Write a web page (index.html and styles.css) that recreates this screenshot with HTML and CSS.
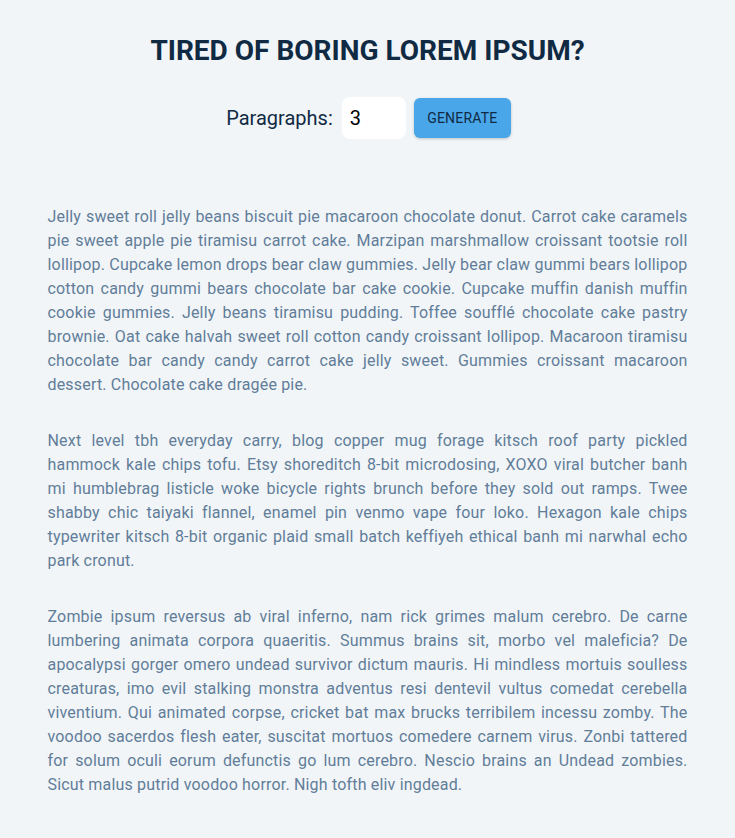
FILE: index.html
```html
<!DOCTYPE html>
<html lang="en">
<head>
<meta charset="utf-8">
<title>Lorem Ipsum Generator</title>
<link rel="stylesheet" href="styles.css">
</head>
<body>
<section class="section-center">
  <h3 class="title">Tired of boring lorem ipsum?</h3>
  <form class="lorem-form">
    <label class="label" for="amount">Paragraphs:</label>
    <input class="amount" type="number" id="amount" value="3">
    <button class="btn" type="button">Generate</button>
  </form>
  <article class="lorem-text">
    <p>Jelly sweet roll jelly beans biscuit pie macaroon chocolate donut. Carrot cake caramels pie sweet apple pie tiramisu carrot cake. Marzipan marshmallow croissant tootsie roll lollipop. Cupcake lemon drops bear claw gummies. Jelly bear claw gummi bears lollipop cotton candy gummi bears chocolate bar cake cookie. Cupcake muffin danish muffin cookie gummies. Jelly beans tiramisu pudding. Toffee soufflé chocolate cake pastry brownie. Oat cake halvah sweet roll cotton candy croissant lollipop. Macaroon tiramisu chocolate bar candy candy carrot cake jelly sweet. Gummies croissant macaroon dessert. Chocolate cake dragée pie.</p>
    <p>Next level tbh everyday carry, blog copper mug forage kitsch roof party pickled hammock kale chips tofu. Etsy shoreditch 8-bit microdosing, XOXO viral butcher banh mi humblebrag listicle woke bicycle rights brunch before they sold out ramps. Twee shabby chic taiyaki flannel, enamel pin venmo vape four loko. Hexagon kale chips typewriter kitsch 8-bit organic plaid small batch keffiyeh ethical banh mi narwhal echo park cronut.</p>
    <p>Zombie ipsum reversus ab viral inferno, nam rick grimes malum cerebro. De carne lumbering animata corpora quaeritis. Summus brains sit, morbo vel maleficia? De apocalypsi gorger omero undead survivor dictum mauris. Hi mindless mortuis soulless creaturas, imo evil stalking monstra adventus resi dentevil vultus comedat cerebella viventium. Qui animated corpse, cricket bat max brucks terribilem incessu zomby. The voodoo sacerdos flesh eater, suscitat mortuos comedere carnem virus. Zonbi tattered for solum oculi eorum defunctis go lum cerebro. Nescio brains an Undead zombies. Sicut malus putrid voodoo horror. Nigh tofth eliv ingdead.</p>
  </article>
</section>
</body>
</html>
```
FILE: styles.css
```css
* {
  box-sizing: border-box;
  margin: 0;
  padding: 0;
}

body {
  background: #f1f5f8;
  color: #102a43;
  font-family: Roboto, "Liberation Sans", sans-serif;
  font-size: 16px;
  line-height: 1.5;
}

.section-center {
  width: 90vw;
  max-width: 640px;
  margin: 0 auto;
  padding-top: 33px;
  padding-bottom: 40px;
}

.title {
  text-align: center;
  text-transform: uppercase;
  font-size: 28px;
  font-weight: 700;
  line-height: 1.25;
  letter-spacing: 0;
  color: #102a43;
  margin-bottom: 29px;
}

.lorem-form {
  display: flex;
  align-items: center;
  justify-content: center;
  gap: 8px;
  padding-left: 2px;
}

.label {
  font-size: 20px;
  color: #102a43;
  margin-right: 1px;
}

.amount {
  width: 64px;
  height: 42px;
  padding: 4px 8px;
  border: none;
  border-radius: 8px;
  background: #fff;
  font-family: Roboto, "Liberation Sans", sans-serif;
  font-size: 20px;
  color: #000;
  outline: none;
  -moz-appearance: textfield;
}

.amount::-webkit-outer-spin-button,
.amount::-webkit-inner-spin-button {
  -webkit-appearance: none;
  margin: 0;
}

.btn {
  width: 97px;
  height: 40px;
  border: none;
  border-radius: 6px;
  background: #49a6e9;
  color: #102a43;
  font-family: Roboto, "Liberation Sans", sans-serif;
  font-size: 14px;
  text-transform: uppercase;
  letter-spacing: 0.2px;
  box-shadow: 0 1px 3px rgba(0, 0, 0, 0.2);
  cursor: pointer;
}

.lorem-text {
  margin-top: 66px;
}

.lorem-text p {
  color: #617d98;
  text-align: justify;
  line-height: 24px;
  letter-spacing: 0.18px;
  margin-bottom: 32px;
}
```
